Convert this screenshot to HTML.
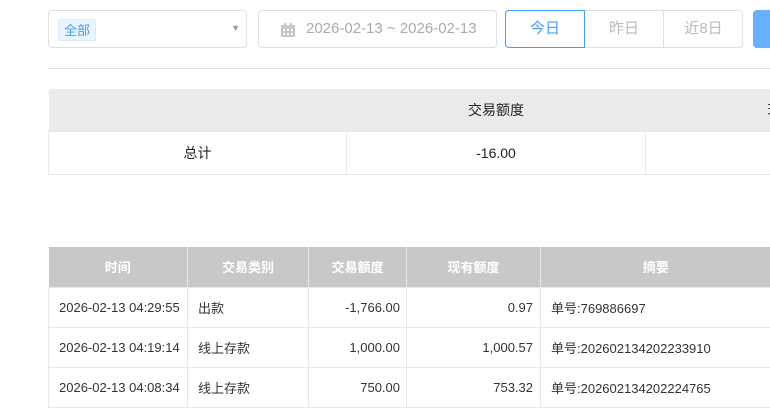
<!DOCTYPE html>
<html><head><meta charset="utf-8"><style>
*{box-sizing:border-box;margin:0;padding:0}
body{width:770px;height:410px;overflow:hidden;background:#fff;font-family:"Liberation Sans","Noto Sans CJK SC",sans-serif;font-size:13px;color:#333;position:relative}
.abs{position:absolute}
.box{border:1px solid #dcdfe6;border-radius:4px}
.wrap{position:absolute;overflow:hidden}
table{border-collapse:collapse;table-layout:fixed}
td,th{overflow:hidden;white-space:nowrap}
</style></head><body>
<div class="abs box" style="left:48px;top:10px;width:199px;height:38px">
 <span class="abs" style="left:9px;top:8px;height:22px;padding:0 5px;line-height:22px;background:#ecf5ff;border:1px solid #d9ecff;border-radius:2px;color:#409eff;font-size:13px">全部</span>
 <span class="abs" style="right:6px;top:12px;font-size:9px;color:#999">▼</span>
</div>
<div class="abs box" style="left:258px;top:10px;width:239px;height:38px">
 <svg class="abs" style="left:21px;top:11px" width="16" height="16" viewBox="0 0 16 16"><rect x="1" y="3" width="14" height="12" fill="#c8c8c8"/><rect x="4" y="1" width="2" height="4" fill="#c8c8c8"/><rect x="10" y="1" width="2" height="4" fill="#c8c8c8"/><g fill="#fff"><rect x="3" y="7" width="2" height="2"/><rect x="7" y="7" width="2" height="2"/><rect x="11" y="7" width="2" height="2"/><rect x="3" y="11" width="2" height="2"/><rect x="7" y="11" width="2" height="2"/><rect x="11" y="11" width="2" height="2"/></g></svg>
 <span class="abs" style="left:47px;top:9px;color:#aaa;font-size:15px">2026-02-13 ~ 2026-02-13</span>
</div>
<div class="abs box" style="left:505px;top:10px;width:238px;height:38px"></div>
<div class="abs" style="left:505px;top:10px;width:80px;height:38px;border:1px solid #409eff;border-radius:4px 0 0 4px;color:#409eff;text-align:center;line-height:36px;font-size:15px">今日</div>
<div class="abs" style="left:585px;top:10px;width:79px;height:38px;border-right:1px solid #dcdfe6;color:#bbb;text-align:center;line-height:38px;font-size:15px">昨日</div>
<div class="abs" style="left:664px;top:10px;width:79px;height:38px;color:#bbb;text-align:center;line-height:38px;font-size:15px">近8日</div>
<div class="abs" style="left:753px;top:10px;width:17px;height:38px;background:#66b1ff;border-radius:4px 0 0 4px"></div>
<div class="abs" style="left:48px;top:68px;width:722px;height:1px;background:#e4e4e4"></div>
<div class="wrap" style="left:48px;top:89px;width:722px;height:90px">
<table style="width:897px">
<tr style="height:42px;background:#ebebeb"><th style="width:298px"></th><th style="width:299px;font-weight:normal;font-size:14px;color:#222">交易额度</th><th style="width:300px;font-weight:normal;font-size:14px;color:#222">现有额度</th></tr>
<tr style="height:43px;text-align:center;font-size:14px;color:#222"><td style="border:1px solid #e8e8e8">总计</td><td style="border:1px solid #e8e8e8">-16.00</td><td style="border:1px solid #e8e8e8"></td></tr>
</table>
</div>
<div class="wrap" style="left:48px;top:247px;width:722px;height:163px">
<table style="width:722px">
<tr style="height:40px;background:#c8c8c8;color:#fff;font-size:13px"><th style="width:139px;border-right:1px solid #e8e8e8">时间</th><th style="width:121px;border-right:1px solid #e8e8e8">交易类别</th><th style="width:98px;border-right:1px solid #e8e8e8">交易额度</th><th style="width:134px;border-right:1px solid #e8e8e8">现有额度</th><th style="width:230px">摘要</th></tr>
<tr style="height:40px"><td style="border:1px solid #e8e8e8;padding-left:10px">2026-02-13 04:29:55</td><td style="border:1px solid #e8e8e8;padding-left:10px">出款</td><td style="border:1px solid #e8e8e8;text-align:right;padding-right:6px">-1,766.00</td><td style="border:1px solid #e8e8e8;text-align:right;padding-right:7px">0.97</td><td style="border:1px solid #e8e8e8;padding-left:10px">单号:769886697</td></tr>
<tr style="height:40px"><td style="border:1px solid #e8e8e8;padding-left:10px">2026-02-13 04:19:14</td><td style="border:1px solid #e8e8e8;padding-left:10px">线上存款</td><td style="border:1px solid #e8e8e8;text-align:right;padding-right:6px">1,000.00</td><td style="border:1px solid #e8e8e8;text-align:right;padding-right:7px">1,000.57</td><td style="border:1px solid #e8e8e8;padding-left:10px">单号:202602134202233910</td></tr>
<tr style="height:40px"><td style="border:1px solid #e8e8e8;padding-left:10px">2026-02-13 04:08:34</td><td style="border:1px solid #e8e8e8;padding-left:10px">线上存款</td><td style="border:1px solid #e8e8e8;text-align:right;padding-right:6px">750.00</td><td style="border:1px solid #e8e8e8;text-align:right;padding-right:7px">753.32</td><td style="border:1px solid #e8e8e8;padding-left:10px">单号:202602134202224765</td></tr>
</table>
</div>
</body></html>
